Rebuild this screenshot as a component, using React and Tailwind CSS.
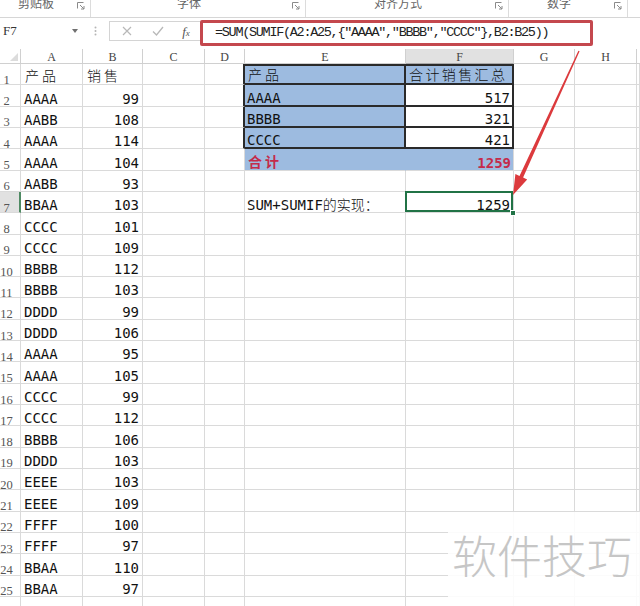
import React from 'react';
import { twMerge } from 'tailwind-merge';

const W = ['w-[21px]', 'w-[62px]', 'w-[60px]', 'w-[62px]', 'w-[40px]', 'w-[161px]', 'w-[108px]', 'w-[61px]', 'w-[62px]'];
const LETTERS = ['A', 'B', 'C', 'D', 'E', 'F', 'G', 'H'];
const DATA = [
  ['AAAA', 99], ['AABB', 108], ['AAAA', 114], ['AAAA', 104], ['AABB', 93], ['BBAA', 103],
  ['CCCC', 101], ['CCCC', 109], ['BBBB', 112], ['BBBB', 103], ['DDDD', 99], ['DDDD', 106],
  ['AAAA', 95], ['AAAA', 105], ['CCCC', 99], ['CCCC', 112], ['BBBB', 106], ['DDDD', 103],
  ['EEEE', 103], ['EEEE', 109], ['FFFF', 100], ['FFFF', 97], ['BBAA', 110], ['BBAA', 97],
];
const TABLE = { 2: ['AAAA', 517], 3: ['BBBB', 321], 4: ['CCCC', 421] };
const FORMULA = '=SUM(SUMIF(A2:A25,{"AAAA","BBBB","CCCC"},B2:B25))';

const MONO = "font-['DejaVu_Sans_Mono',monospace] text-[14px] leading-none text-[#111] whitespace-nowrap";
const CJK = "font-['Noto_Sans_CJK_SC',sans-serif] text-[14px] leading-none text-[#111] whitespace-nowrap";
const BASE = 'h-full shrink-0 flex items-end border-r border-b border-[#dadada] overflow-hidden';
const BLUE = 'bg-[#9dbbe0]';
const DARKBOX = 'border-r-2 border-b-2 border-[#2a2a2a]';
const RED = 'text-[#c42b4b] font-bold';

function Cell({ w, className, children }) {
  return <div className={twMerge(BASE, w, className)}>{children}</div>;
}

function Launcher() {
  return (
    <svg width="8" height="8" viewBox="0 0 8 8" className="shrink-0">
      <path d="M0.5 6.5V0.5H6.5" stroke="#8a8a8a" fill="none" strokeWidth="1" />
      <path d="M3 3L7 7M7 4V7H4" stroke="#8a8a8a" fill="none" strokeWidth="1" />
    </svg>
  );
}

function RibbonGroup({ w, label }) {
  return (
    <div className={twMerge('h-full flex items-start border-r border-[#dcdcdc] shrink-0', w)}>
      <div className="flex-1 flex justify-center">
        <span className="-mt-[3px] font-['Noto_Sans_CJK_SC',sans-serif] text-[12px] leading-none text-[#666]">{label}</span>
      </div>
      <div className="w-[18px] flex justify-center pt-[2px]">
        <Launcher />
      </div>
    </div>
  );
}

function SheetRow({ r }) {
  const sel = r === 7;
  const d = r >= 2 && r <= 25 ? DATA[r - 2] : null;

  let aCell = null;
  let bCell = null;
  if (r === 1) {
    aCell = <span className={twMerge(CJK, 'pl-[4px] pb-[2px] tracking-[3px] font-light')}>产品</span>;
    bCell = <span className={twMerge(CJK, 'pl-[4px] pb-[2px] tracking-[3px] font-light')}>销售</span>;
  } else if (d) {
    aCell = <span className={twMerge(MONO, 'pl-[3px]')}>{d[0]}</span>;
    bCell = <span className={twMerge(MONO, 'pr-[3px]')}>{d[1]}</span>;
  }

  let eCls = '';
  let fCls = '';
  let eContent = null;
  let fContent = null;
  let dCls = '';
  if (r >= 1 && r <= 4) dCls = 'border-r-2 border-r-[#2a2a2a]';
  if (r === 1) {
    eCls = twMerge(BLUE, DARKBOX, 'border-t-2');
    fCls = twMerge(BLUE, DARKBOX, 'border-t-2');
    eContent = <span className={twMerge(CJK, 'pl-[3px] pb-[2px] tracking-[3px] font-light')}>产品</span>;
    fContent = <span className={twMerge(CJK, 'pl-[3px] pb-[2px] tracking-[2.4px] font-light')}>合计销售汇总</span>;
  } else if (TABLE[r]) {
    eCls = twMerge(BLUE, DARKBOX);
    fCls = twMerge('bg-white justify-end', DARKBOX);
    eContent = <span className={twMerge(MONO, 'pl-[2px]')}>{TABLE[r][0]}</span>;
    fContent = <span className={twMerge(MONO, 'pr-[2px]')}>{TABLE[r][1]}</span>;
  } else if (r === 5) {
    eCls = twMerge(BLUE, 'border-r-[#9dbbe0]');
    fCls = twMerge(BLUE, 'justify-end');
    eContent = <span className={twMerge(CJK, RED, 'pl-[3px] pb-[2px] tracking-[3px]')}>合计</span>;
    fContent = <span className={twMerge(MONO, RED, 'pr-[2px]')}>1259</span>;
  } else if (r === 7) {
    fCls = 'justify-end overflow-visible relative';
    eContent = (
      <span className="pl-[2px] flex items-end">
        <span className={MONO}>SUM+SUMIF</span>
        <span className={twMerge(CJK, 'pb-[1px] font-light')}>的实现：</span>
      </span>
    );
    fContent = (
      <>
        <span className={twMerge(MONO, 'pr-[3px]')}>1259</span>
        <div className="absolute -left-px -top-px right-0 bottom-0 border-2 border-[#217346]" />
        <div className="absolute -right-[3px] -bottom-[4px] w-[6px] h-[6px] bg-[#217346] border border-white" />
      </>
    );
  }

  return (
    <div className="flex h-[21.32px] shrink-0">
      <Cell w={W[0]} className={twMerge('bg-white', sel && 'bg-[#e1e1e1] border-r-2 border-r-[#4f8a63]')}>
        <span className="w-[13px] text-center font-['Liberation_Serif',serif] text-[12.5px] leading-none text-[#555] translate-y-[2px] whitespace-nowrap">
          {r}
        </span>
      </Cell>
      <Cell w={W[1]}>{aCell}</Cell>
      <Cell w={W[2]} className={r === 1 ? '' : 'justify-end'}>{bCell}</Cell>
      <Cell w={W[3]} />
      <Cell w={W[4]} className={dCls} />
      <Cell w={W[5]} className={eCls}>{eContent}</Cell>
      <Cell w={W[6]} className={fCls}>{fContent}</Cell>
      <Cell w={W[7]} />
      <Cell w={W[8]} />
      <Cell w="flex-1 shrink" />
    </div>
  );
}

export default function App() {
  const rows = [];
  for (let r = 1; r <= 26; r++) rows.push(<SheetRow key={r} r={r} />);

  return (
    <div className="relative w-[640px] h-[606px] overflow-hidden bg-white">
      {/* ribbon group labels */}
      <div className="flex h-[18px] border-b border-[#d6d6d6] bg-white overflow-hidden">
        <RibbonGroup w="w-[91px]" label="剪贴板" />
        <RibbonGroup w="w-[215px]" label="字体" />
        <RibbonGroup w="w-[203px]" label="对齐方式" />
        <RibbonGroup w="w-[119px]" label="数字" />
        <div className="flex-1" />
      </div>

      {/* formula bar */}
      <div className="flex h-[31px] items-start pt-[3px] bg-white">
        <div className="w-[82px] h-[19px] flex items-center justify-between pl-[3px] pr-[4px] shrink-0">
          <span className="font-['Liberation_Serif',serif] text-[13px] leading-none text-[#333]">F7</span>
          <svg width="6" height="4" viewBox="0 0 6 4">
            <path d="M0 0H6L3 4Z" fill="#707070" />
          </svg>
        </div>
        <div className="w-[27px] h-[19px] flex items-center justify-center shrink-0">
          <svg width="3" height="10" viewBox="0 0 3 10">
            <circle cx="1.5" cy="1.5" r="1" fill="#b5b5b5" />
            <circle cx="1.5" cy="5" r="1" fill="#b5b5b5" />
            <circle cx="1.5" cy="8.5" r="1" fill="#b5b5b5" />
          </svg>
        </div>
        <div className="w-[91px] h-[20px] flex items-center border border-r-0 border-[#d4d4d4] shrink-0">
          <div className="w-[34px] flex justify-center">
            <svg width="10" height="10" viewBox="0 0 10 10">
              <path d="M1 1L9 9M9 1L1 9" stroke="#b8b8b8" strokeWidth="1.2" fill="none" />
            </svg>
          </div>
          <div className="w-[28px] flex justify-center">
            <svg width="12" height="10" viewBox="0 0 12 10">
              <path d="M1 5.5L4.5 9L11 1" stroke="#b8b8b8" strokeWidth="1.3" fill="none" />
            </svg>
          </div>
          <div className="flex-1 flex justify-center items-end">
            <span className="font-['Liberation_Serif',serif] italic text-[13px] leading-none text-[#555]">f</span>
            <span className="font-['Liberation_Serif',serif] italic text-[9px] leading-none text-[#555]">x</span>
          </div>
        </div>
        <div className="w-[393px] h-[26px] -mt-[1px] border-[3px] border-[#c4484e] rounded-[2px] flex items-center pl-[12px] shrink-0 bg-white">
          <span className="font-['Liberation_Mono',monospace] text-[13.5px] tracking-[-1.3px] leading-none text-[#222] whitespace-nowrap">
            {FORMULA}
          </span>
        </div>
        <div className="flex-1" />
      </div>

      {/* column headers */}
      <div className="flex h-[15px] shrink-0">
        <div className={twMerge('h-full shrink-0 border-r border-b border-[#d0d0d0] flex items-end justify-end pr-[2px] pb-[2px] bg-white', W[0])}>
          <svg width="8" height="8" viewBox="0 0 8 8">
            <path d="M8 0V8H0Z" fill="#dcdcdc" />
          </svg>
        </div>
        {LETTERS.map((l, i) => (
          <div
            key={l}
            className={twMerge(
              'h-full shrink-0 border-r border-b border-[#d0d0d0] flex items-center justify-center pt-[1px] bg-white',
              W[i + 1],
              l === 'F' && 'bg-[#e1e1e1] border-b-[#a9a9a9]'
            )}
          >
            <span className="font-['Liberation_Serif',serif] text-[12px] leading-none text-[#444]">{l}</span>
          </div>
        ))}
        <div className="flex-1 h-full border-b border-[#d0d0d0] bg-white" />
      </div>

      {/* grid */}
      <div className="flex flex-col">{rows}</div>

      {/* red arrow */}
      <svg className="absolute inset-0 pointer-events-none" width="640" height="606" viewBox="0 0 640 606">
        <polygon
          points="579.6,51.3 523.1,177.6 527.2,179.5 513,195 515.4,174.1 519.5,176 578.4,50.7"
          fill="#dc3a3d"
        />
      </svg>

      {/* watermark */}
      <div className="absolute left-[448px] top-[512px] w-[192px] h-[94px] bg-white/90 pl-[4px] pt-[20px]">
        <span className="font-['Noto_Sans_CJK_SC',sans-serif] font-light text-[45px] leading-none text-[#c6c6c6] whitespace-nowrap">
          软件技巧
        </span>
      </div>
    </div>
  );
}
